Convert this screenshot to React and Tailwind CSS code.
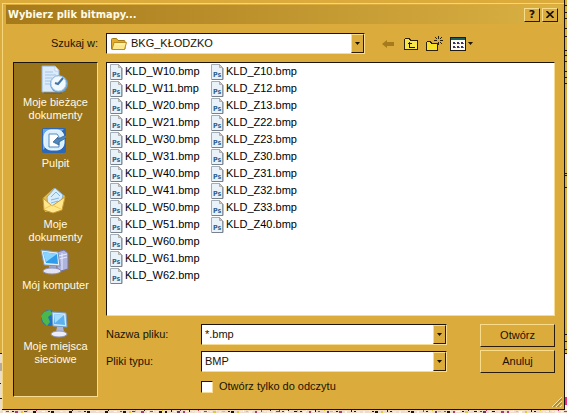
import React, { useState } from 'react';

const COLUMNS = [
  ['W10', 'W11', 'W20', 'W21', 'W30', 'W31', 'W40', 'W41', 'W50', 'W51', 'W60', 'W61', 'W62'],
  ['Z10', 'Z12', 'Z13', 'Z22', 'Z23', 'Z30', 'Z31', 'Z32', 'Z33', 'Z40']
];

const SUNKEN = 'border border-t-[#1c1405] border-l-[#1c1405] border-r-[#f6dc94] border-b-[#f6dc94]';
const RAISED = 'border border-t-[#f8dc8c] border-l-[#f8dc8c] border-r-[#2a1c04] border-b-[#2a1c04] bg-[#dbac3c]';

function RecentIcon() {
  return (
    <svg viewBox="4 0 32 32" className="w-8 h-8 shrink-0">
      <path d="M6 2h13l4 4v22H6z" fill="#dcebfa" stroke="#8fb2d8" />
      <path d="M19 2v5h4z" fill="#fff" stroke="#a9c3df" strokeWidth=".7" />
      <path d="M9 8h8M9 11h11M9 14h7M9 17h6M9 20h5" stroke="#a3c4e6" />
      <circle cx="23" cy="20" r="9" fill="#6f9fcb" />
      <circle cx="22.500" cy="19.500" r="7.500" fill="#f1f8ff" stroke="#b8d5ef" />
      <path d="M27 14l-5 6-3-1" fill="none" stroke="#4575a5" strokeWidth="2" />
      <path d="M8 29h18" stroke="#5a430f" opacity=".5" />
    </svg>
  );
}

function DesktopIcon() {
  return (
    <svg viewBox="4 0 32 32" className="w-8 h-8 shrink-0">
      <rect x="6" y="3" width="24" height="25" rx="2" fill="#2c68b5" />
      <path d="M7 4h21L7 25z" fill="#68a8e5" />
      <rect x="8" y="5" width="20" height="20" rx="7" fill="#d7efff" stroke="#f6fcff" />
      <path d="M13 9h8l2 3v10H13z" fill="#fff" stroke="#568abd" />
      <path d="M30 10l-8 4v-2l-5 5 6 3v-3l7-4" fill="#4d87bd" stroke="#295b8e" strokeWidth=".7" />
    </svg>
  );
}

function DocumentsIcon() {
  return (
    <svg viewBox="4 0 32 32" className="w-8 h-8 shrink-0">
      <path d="M7 12L18 2l11 8-3 13-17 3z" fill="#e9bd47" />
      <path d="M11 11l8-9 8 7-3 12-12 2z" fill="#d8edfb" stroke="#86add0" />
      <path d="M15 11l5-5 4 4M15 14l8-2M15 17l7-2" fill="none" stroke="#83b6df" />
      <path d="M7 12l9 8 13-9-3 13-9 3-9-3z" fill="#ffe78a" stroke="#c99a34" />
      <path d="M8 23l8-4 9 4" fill="none" stroke="#f0c955" />
    </svg>
  );
}

function ComputerIcon() {
  return (
    <svg viewBox="4 0 32 32" className="w-8 h-8 shrink-0">
      <path d="M21 5l7-2 4 3v16l-7 2-4-3z" fill="#aeb4dd" stroke="#7076aa" />
      <path d="M26 6v17M23 9l8-2M23 12l8-2" stroke="#e9ebff" />
      <path d="M5 3l17 2 2 14-16-1z" fill="#e2edf8" stroke="#7595bd" />
      <path d="M7 5l14 2 1 10-12-1z" fill="#309be9" />
      <path d="M7 5l14 2-11 8z" fill="#86d4ff" />
      <path d="M13 19h7l1 4h-8z" fill="#9aa1ca" />
      <ellipse cx="16" cy="24" rx="9" ry="3" fill="#e2e4f5" stroke="#8d92bb" />
    </svg>
  );
}

function NetworkIcon() {
  return (
    <svg viewBox="4 0 32 32" className="w-8 h-8 shrink-0">
      <circle cx="13" cy="10" r="8" fill="#1d74cb" />
      <path d="M8 4l6-2 2 4-4 3 2 5-3 4-4-4-2-6z" fill="#4cb84b" />
      <path d="M16 4l14 1 1 14-14-1z" fill="#cfe8fb" stroke="#789fc4" />
      <path d="M18 6l10 1 1 10-11-1z" fill="#5db1ee" />
      <path d="M18 6l10 1-9 8z" fill="#a6dcfc" />
      <path d="M21 19h6l1 5h-8z" fill="#aeb6d4" />
      <ellipse cx="23" cy="26" rx="8" ry="3" fill="#eceefa" stroke="#9298bc" />
    </svg>
  );
}

const PLACES = [
  { label: 'Moje bieżące dokumenty', Icon: RecentIcon },
  { label: 'Pulpit', Icon: DesktopIcon },
  { label: 'Moje dokumenty', Icon: DocumentsIcon },
  { label: 'Mój komputer', Icon: ComputerIcon },
  { label: 'Moje miejsca sieciowe', Icon: NetworkIcon }
];

function BitmapIcon() {
  return (
    <svg viewBox="0 0 16 16" className="w-4 h-4 shrink-0">
      <path d="M1.500.5h8l3 3v12h-11z" fill="#e9f2f9" stroke="#a3adb8" />
      <path d="M9.500.5v3h3z" fill="#d9c9c0" stroke="#9b9b9b" strokeWidth=".7" />
      <path d="M2 15.500h11V4" fill="none" stroke="#77828e" />
      <text x="3" y="13" fontSize="7" fontWeight="bold" fill="#2f6190" className="font-['DejaVu_Sans_Condensed','DejaVu_Sans',sans-serif]">Ps</text>
    </svg>
  );
}

function FolderIcon() {
  return (
    <svg viewBox="0 0 16 16" className="w-4 h-4 shrink-0">
      <path d="M.5 13V3.500q0-1 1-1h4l1.500 2h6q1 0 1 1V13z" fill="#e3ad2b" stroke="#a37912" />
      <path d="M1 13.500L3 6.500h12.500l-2 7z" fill="#ffe88b" stroke="#ba8d20" />
      <path d="M4 8h10" stroke="#fff7c6" />
    </svg>
  );
}

// Torn strips of the map that is open under the dialog
function MapStrips() {
  const colors = ['#f6f0e4', '#e8c634', '#221510', '#edd9da', '#a83c72', '#f4ead0', '#221510', '#5e3a63', '#fff6e8'];
  return (
    <>
      <svg className="absolute right-0 top-0 w-[2px] h-full" viewBox="0 0 2 413" preserveAspectRatio="none">
        <rect width="2" height="353" fill="#dbad42" />
        <rect y="353" width="2" height="60" fill="#f8efea" />
        {[5, 12, 18, 28, 36, 50, 55, 61, 71, 77, 83, 173, 175, 187, 334, 341, 349, 353].map((y) => (
          <rect key={y} y={y} width="2" height="1" fill="#2a1b08" />
        ))}
        <rect y="397" width="2" height="8" fill="#f02c8c" />
      </svg>
      <svg className="absolute left-0 bottom-0 w-[2px] h-[60px]" viewBox="0 0 2 60">
        <rect width="2" height="60" fill="#e9dccb" />
        <path d="M0 .5h2M0 30.500h1M0 45.500h2" stroke="#2a1b08" />
        <path d="M0 10h2v8H0z" fill="#b5a89c" />
      </svg>
      <svg className="absolute left-0 bottom-0 w-full h-[3px]" viewBox="0 0 567 3" preserveAspectRatio="none">
        <rect width="567" height="3" fill="#efdccb" />
        {Array.from({ length: 189 }, (_, i) => (
          <rect key={i} x={i * 3} y={(i * i) % 3} width={1 + ((i * 7) % 3)} height={1 + (i % 2)} fill={colors[((i * i * 13 + i * 31) % 101) % 9]} />
        ))}
      </svg>
    </>
  );
}

function DropArrow() {
  return (
    <span className={`flex w-[13px] shrink-0 items-center justify-center ${RAISED}`}>
      <svg viewBox="0 0 5 3" className="w-[5px] h-[3px]"><path d="M0 0h5L2.500 3z" fill="#1c1204" /></svg>
    </span>
  );
}

function Toolbar() {
  return (
    <div className="flex items-center gap-[7px]">
      <button aria-label="Wstecz">
        <svg viewBox="0 0 14 16" className="w-[14px] h-4"><path d="M0 8l5-4v2h7v4H5v2z" fill="#a57b1d" /></svg>
      </button>
      <button aria-label="W górę">
        <svg viewBox="0 0 16 16" className="w-4 h-4" shapeRendering="crispEdges">
          <path d="M1.500 13.500v-10l1-1h4l1 2h7v9z" fill="#f7e64a" stroke="#2c2106" />
          <path d="M6.500 6v5.500h5M5 7.500h4" fill="none" stroke="#1b1404" />
        </svg>
      </button>
      <button aria-label="Nowy folder">
        <svg viewBox="0 0 17 16" className="w-[17px] h-4" shapeRendering="crispEdges">
          <path d="M.5 14.500v-8l1-1h3l1 2h6v7z" fill="#f7e227" stroke="#2c2106" />
          <path d="M12.500 0v3M12.500 6v3M8 4.500h3M14 4.500h3M9 1l2 2M16 1l-2 2M14 6l2 2" stroke="#2c2106" />
        </svg>
      </button>
      <button aria-label="Widok" className="flex items-center gap-0.5">
        <svg viewBox="0 0 16 16" className="w-4 h-4" shapeRendering="crispEdges">
          <rect x=".5" y="1.500" width="15" height="13" fill="#fffbea" stroke="#1b1a18" />
          <path d="M1 2h14v2H1z" fill="#16605f" />
          <path d="M3 6h2v2H3zM7 6h2v2H7zM11 6h2v2h-2zM3 10h2v2H3zM7 10h2v2H7zM11 10h2v2h-2z" fill="#353270" />
          <path d="M5 7h1M9 7h1M13 7h1M5 11h1M9 11h1M13 11h1" stroke="#a85c3c" />
        </svg>
        <svg viewBox="0 0 5 3" className="w-[5px] h-[3px]"><path d="M0 0h5L2.500 3z" fill="#1c1204" /></svg>
      </button>
    </div>
  );
}

function Field({ label, id, children }) {
  return (
    <div className="flex items-center">
      <label htmlFor={id} className="w-[95px] shrink-0">{label}</label>
      <div className={`flex h-[21px] min-w-0 flex-1 bg-white ${SUNKEN}`}>
        {children}
        <DropArrow />
      </div>
    </div>
  );
}

export default function App() {
  const [fileName, setFileName] = useState('*.bmp');
  const [readOnly, setReadOnly] = useState(false);

  return (
    <div className="relative min-h-screen pr-[2px] pb-[3px] bg-[#dbac3c] text-[11px] leading-[17px] text-[#1a1204] font-['Liberation_Sans',sans-serif]">
      <div className="relative border-r border-b border-[#1a1204] bg-[#dbac3c] pt-[3px] pl-[2px]">
        <div className="border-l border-t border-[#f6d67c] pl-[3px] pr-[2px] pt-px pb-3">
          {/* Title bar */}
          <div className="flex h-[19px] items-center justify-between bg-linear-to-r from-[#a67a1a] to-[#dab143] pl-0.5 pr-1">
            <h1 className="whitespace-nowrap text-[11px] font-bold text-[#fffbe8] font-['DejaVu_Sans_Condensed','DejaVu_Sans',sans-serif]">Wybierz plik bitmapy...</h1>
            <div className="flex gap-0.5">
              <button aria-label="Pomoc" className={`flex w-4 h-[14px] items-center justify-center text-[11px] font-bold leading-3 font-['DejaVu_Sans',sans-serif] ${RAISED}`}>?</button>
              <button aria-label="Zamknij" className={`flex w-4 h-[14px] items-center justify-center ${RAISED}`}>
                <svg viewBox="0 0 8 7" className="w-2 h-[7px]"><path d="M.5 0l7 7M7.500 0l-7 7" stroke="#1a1204" strokeWidth="1.600" /></svg>
              </button>
            </div>
          </div>

          {/* Folder row */}
          <div className="mt-[9px] flex items-center">
            <label htmlFor="folder" className="w-[100px] shrink-0 pr-2 text-right">Szukaj w:</label>
            <div className={`flex h-[21px] min-w-0 flex-1 items-stretch bg-white pl-1 ${SUNKEN}`}>
              <span className="flex items-center"><FolderIcon /></span>
              <select id="folder" className="min-w-0 flex-1 appearance-none bg-transparent pl-1 outline-none">
                <option>BKG_KŁODZKO</option>
              </select>
              <DropArrow />
            </div>
            <div className="w-[197px] shrink-0 pl-[17px]"><Toolbar /></div>
          </div>

          <div className="mt-2 flex gap-2 pl-[7px] pr-[7px]">
            {/* Places */}
            <nav className={`w-[85px] shrink-0 bg-[#997319] pt-px text-[#fffbe8] ${SUNKEN}`}>
              {PLACES.map(({ label, Icon }) => (
                <button key={label} className="flex h-[61px] w-full flex-col items-center px-[7px] leading-[13px]">
                  <Icon />
                  <span>{label}</span>
                </button>
              ))}
            </nav>

            <div className="min-w-0 flex-1 pb-[2px]">
              <div className={`flex h-[254px] gap-[13px] bg-white pl-0.5 text-black ${SUNKEN}`}>
                {COLUMNS.map((files) => (
                  <ul key={files[0]} className="w-[88px]">
                    {files.map((name) => (
                      <li key={name} className="flex h-[17px] items-center whitespace-nowrap">
                        <BitmapIcon />
                        <span>KLD_{name}.bmp</span>
                      </li>
                    ))}
                  </ul>
                ))}
              </div>

              <div className="mt-2 flex items-start gap-[33px]">
                <div className="flex min-w-0 flex-1 flex-col gap-[6px]">
                  <Field label="Nazwa pliku:" id="file-name">
                    <input id="file-name" value={fileName} onChange={(e) => setFileName(e.target.value)} className="min-w-0 flex-1 bg-transparent pl-[3px] outline-none" />
                  </Field>
                  <Field label="Pliki typu:" id="file-type">
                    <select id="file-type" className="min-w-0 flex-1 appearance-none bg-transparent pl-[3px] outline-none">
                      <option>BMP</option>
                    </select>
                  </Field>
                  <label className="ml-[95px] flex items-center gap-[6px]">
                    <input type="checkbox" checked={readOnly} onChange={(e) => setReadOnly(e.target.checked)} className={`w-3 h-3 appearance-none bg-white checked:bg-[#997319] ${SUNKEN}`} />
                    Otwórz tylko do odczytu
                  </label>
                </div>
                <div className="flex w-[75px] shrink-0 flex-col gap-[3px]">
                  <button className={`h-[23px] ${RAISED}`}>Otwórz</button>
                  <button className={`h-[23px] ${RAISED}`}>Anuluj</button>
                </div>
              </div>
            </div>
          </div>
        </div>
        <svg viewBox="0 0 10 10" className="absolute right-[2px] bottom-[2px] w-[10px] h-[10px]">
          <path d="M0 10L10 0M4 10l6-6M8 10l2-2" stroke="#f9e6a6" />
          <path d="M1.500 10L10 1.500M5.500 10L10 5.500" stroke="#8c6616" />
        </svg>
      </div>
      <MapStrips />
    </div>
  );
}
